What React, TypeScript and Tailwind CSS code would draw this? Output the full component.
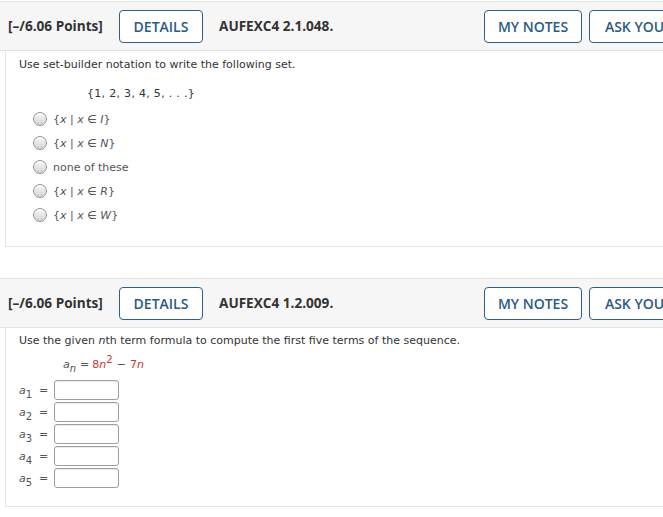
import React from "react";

const Btn = ({ children, w }: { children: React.ReactNode; w: string }) => (
  <div
    className={`${w} h-[33px] flex items-center justify-center rounded-[4px] border-[1.5px] border-[#2f5f88] bg-white text-[14px] font-semibold text-[#2b5a84] shrink-0`}
  >
    {children}
  </div>
);

const Header = ({ code }: { code: string }) => (
  <div className="h-[50px] bg-[#f6f6f6] border-t border-b border-[#e4e4e4] flex items-center font-['Open_Sans',sans-serif]">
    <div className="ml-[8px] w-[111px] text-[13.6px] font-bold text-[#333]">[–/6.06 Points]</div>
    <Btn w="w-[84px]">DETAILS</Btn>
    <div className="ml-[16px] text-[13.6px] font-bold text-[#333] w-[265px]">{code}</div>
    <Btn w="w-[98px]">MY NOTES</Btn>
    <div className="ml-[7px]">
      <Btn w="w-[100px]">ASK YOUR</Btn>
    </div>
  </div>
);

const Radio = () => (
  <span className="inline-block w-[14px] h-[14px] rounded-full border border-[#949494] bg-linear-to-b from-[#ffffff] to-[#cfcfcf] shrink-0" />
);

const Opt = ({ children }: { children: React.ReactNode }) => (
  <div className="h-[24px] flex items-center">
    <Radio />
    <span className="ml-[6px] text-[#555]">{children}</span>
  </div>
);

const SetOpt = ({ s }: { s: string }) => (
  <>
    {"{"}
    <i>x</i> | <i>x</i> <span className="text-[#333]">∈</span> <i>{s}</i>
    {"}"}
  </>
);

const InputRow = ({ n }: { n: number }) => (
  <div className="h-[22px] flex items-center">
    <span className="w-[18px] text-[#555] italic leading-none">
      a<span className="not-italic text-[10px] relative top-[4px]">{n}</span>
    </span>
    <span className="w-[15px] text-[#555] ml-[2px]">=</span>
    <div className="w-[65px] h-[20px] rounded-[3px] border border-[#9e9e9e] bg-white shadow-[inset_0_1px_1px_rgba(0,0,0,0.08)]" />
  </div>
);

export default function App() {
  return (
    <div className="w-[720px] bg-white overflow-hidden pt-[1px]">
      <Header code="AUFEXC4 2.1.048." />
      <div className="ml-[5px] border-l border-b border-[#e6e6e6] pl-[13px] pt-[6px] h-[196px] font-['DejaVu_Sans',sans-serif] text-[11px] leading-[15px]">
        <div className="text-[#333]">Use set-builder notation to write the following set.</div>
        <div className="mt-[14px] ml-[68px] text-[#333] tracking-[0.3px]">{"{1, 2, 3, 4, 5, . . .}"}</div>
        <div className="mt-[6px] ml-[14px]">
          <Opt><SetOpt s="I" /></Opt>
          <Opt><SetOpt s="N" /></Opt>
          <Opt>none of these</Opt>
          <Opt><SetOpt s="R" /></Opt>
          <Opt><SetOpt s="W" /></Opt>
        </div>
      </div>
      <div className="h-[31px]" />
      <Header code="AUFEXC4 1.2.009." />
      <div className="ml-[5px] border-l border-b border-[#e6e6e6] pl-[13px] pt-[5px] h-[179px] font-['DejaVu_Sans',sans-serif] text-[11px] leading-[15px]">
        <div className="text-[#333]">
          Use the given <i>n</i>th term formula to compute the first five terms of the sequence.
        </div>
        <div className="mt-[9px] ml-[44px] h-[20px] text-[#555] whitespace-nowrap">
          <i>a</i>
          <i className="text-[10px] relative top-[4px]">n</i>
          <span className="ml-[4px]">=</span>
          <span className="ml-[3px] text-[#cc3333]">8<i>n</i></span>
          <span className="text-[10px] text-[#cc3333] relative top-[-5px]">2</span>
          <span className="ml-[4px]">−</span>
          <span className="ml-[4px] text-[#cc3333]">7<i>n</i></span>
        </div>
        <div className="mt-[2px]">
          {[1, 2, 3, 4, 5].map((n) => (
            <InputRow key={n} n={n} />
          ))}
        </div>
      </div>
    </div>
  );
}
